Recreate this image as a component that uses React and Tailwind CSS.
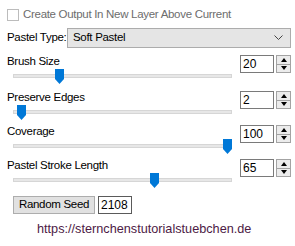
import React from "react";

const font = { fontFamily: '"Liberation Sans", Arial, sans-serif' };

function Spinner({ value }) {
  return (
    <div className="flex items-start gap-[2px]">
      <div className="flex h-[18px] w-[34px] items-center border border-[#7a7a7a] bg-white pl-[2px] text-[12px] leading-none text-black">
        {value}
      </div>
      <div className="flex h-[18px] w-[15px] flex-col border border-[#a3a3a3] bg-[#ececec]">
        <div className="flex flex-1 items-center justify-center border-b border-[#a3a3a3]">
          <svg width="6" height="4" viewBox="0 0 6 4">
            <polygon points="0,4 6,4 3,0" fill="#000" />
          </svg>
        </div>
        <div className="flex flex-1 items-center justify-center">
          <svg width="6" height="4" viewBox="0 0 6 4">
            <polygon points="0,0 6,0 3,4" fill="#000" />
          </svg>
        </div>
      </div>
    </div>
  );
}

function Slider({ value }) {
  const left = 17.5 + 2.1 * value - 4.5 - 13;
  return (
    <div className="relative ml-[6px] h-[20px] w-[219px]">
      <div className="absolute left-0 right-0 top-[6px] h-[4px] border border-[#d6d6d6] bg-[#e7e7e7]" />
      <svg
        className="absolute top-[1px]"
        style={{ left }}
        width="9"
        height="15"
        viewBox="0 0 9 15"
      >
        <polygon points="0,0 9,0 9,10 4.5,15 0,10" fill="#0078d7" />
      </svg>
    </div>
  );
}

function Group({ label, value, h }) {
  return (
    <div className={`flex ${h}`}>
      <div className="flex w-[233px] flex-col">
        <div className="h-[14px] whitespace-nowrap text-[11.5px] leading-[14px] tracking-[-0.3px] text-black">
          {label}
        </div>
        <Slider value={value} />
      </div>
      <div className="mt-[1px]">
        <Spinner value={value} />
      </div>
    </div>
  );
}

export default function App() {
  return (
    <div
      className="h-[246px] w-[295px] bg-white pl-[7px] pt-[8px]"
      style={font}
    >
      <div className="flex h-[13px] items-center gap-[4px]">
        <div className="h-[12px] w-[12px] border border-[#bcbcbc] bg-white" />
        <span className="whitespace-nowrap text-[11.5px] leading-none tracking-[-0.3px] text-[#6d6d6d]">
          Create Output In New Layer Above Current
        </span>
      </div>
      <div className="mt-[7px] flex h-[20px] items-center">
        <span className="w-[60px] whitespace-nowrap text-[11.5px] leading-none tracking-[-0.3px] text-black">
          Pastel Type:
        </span>
        <div className="flex h-[20px] w-[224px] items-center justify-between border border-[#acacac] bg-[#e5e5e5] pl-[5px] pr-[7px]">
          <span className="whitespace-nowrap text-[11.5px] leading-none tracking-[-0.3px] text-black">
            Soft Pastel
          </span>
          <svg width="9" height="6" viewBox="0 0 9 6">
            <polyline
              points="0.5,0.5 4.5,4.5 8.5,0.5"
              fill="none"
              stroke="#444"
              strokeWidth="1"
            />
          </svg>
        </div>
      </div>
      <div className="mt-[6px] flex flex-col">
        <Group label="Brush Size" value={20} h="h-[36px]" />
        <Group label="Preserve Edges" value={2} h="h-[34px]" />
        <Group label="Coverage" value={100} h="h-[34px]" />
        <Group label="Pastel Stroke Length" value={65} h="h-[34px]" />
      </div>
      <div className="mt-[4px] flex items-center gap-[3px] pl-[6px]">
        <div className="flex h-[18px] w-[82px] items-center justify-center whitespace-nowrap border border-[#adadad] bg-[#e1e1e1] text-[11.5px] leading-none tracking-[-0.3px] text-black">
          Random Seed
        </div>
        <div className="flex h-[18px] w-[34px] items-center border border-[#5a5a5a] bg-white pl-[2px] text-[12px] leading-none text-black">
          2108
        </div>
      </div>
      <div className="mt-[8px] whitespace-nowrap pl-[30px] text-[12.7px] leading-[15px] text-[#4d1a45]">
        https://sternchenstutorialstuebchen.de
      </div>
    </div>
  );
}
